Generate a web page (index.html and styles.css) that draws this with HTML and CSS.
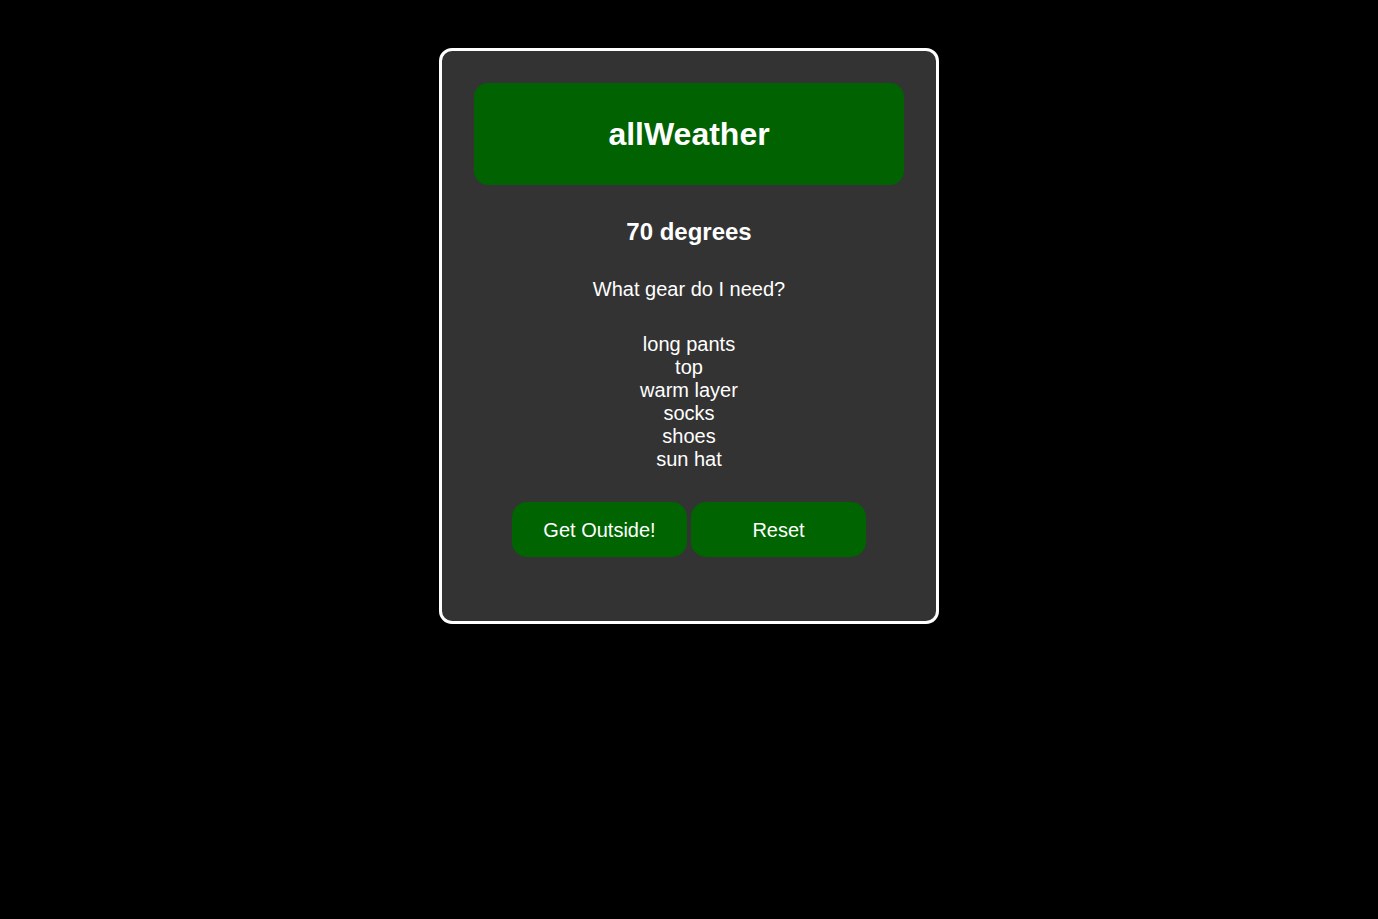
FILE: index.html
```html
<!DOCTYPE html>
<html>
<head>
<meta charset="utf-8">
<link rel="stylesheet" href="styles.css">
</head>
<body>
<main class="card">
  <header class="banner"><h1 class="title">allWeather</h1></header>
  <h2 class="temp">70 degrees</h2>
  <p class="question">What gear do I need?</p>
  <ul class="gear">
    <li>long pants</li>
    <li>top</li>
    <li>warm layer</li>
    <li>socks</li>
    <li>shoes</li>
    <li>sun hat</li>
  </ul>
  <div class="actions">
    <button class="btn">Get Outside!</button>
    <button class="btn">Reset</button>
  </div>
</main>
</body>
</html>
```
FILE: styles.css
```css
html, body {
  margin: 0;
  padding: 0;
  background: #000;
}
body {
  font-family: "Liberation Sans", Arial, sans-serif;
  color: #fff;
  display: flex;
  justify-content: center;
  padding-top: 48px;
}
.card {
  box-sizing: border-box;
  width: 500px;
  height: 576px;
  background: #333333;
  border: 3px solid #fff;
  border-radius: 13px;
  padding: 32px 32px 0;
  display: flex;
  flex-direction: column;
  align-items: center;
  text-align: center;
}
.banner {
  width: 100%;
  height: 102px;
  background: #006200;
  border-radius: 14px;
  display: flex;
  align-items: center;
  justify-content: center;
}
.title {
  margin: 1px 0 0;
  font-size: 32px;
  line-height: 37px;
  font-weight: bold;
}
.temp {
  margin: 33px 0 0;
  font-size: 24px;
  line-height: 28px;
  font-weight: bold;
}
.question {
  margin: 32px 0 0;
  font-size: 20px;
  line-height: 23px;
}
.gear {
  list-style: none;
  margin: 32px 0 0;
  padding: 0;
  font-size: 20px;
  line-height: 23px;
}
.actions {
  margin-top: 31px;
  display: flex;
  gap: 4px;
}
.btn {
  width: 175px;
  height: 55px;
  border: none;
  border-radius: 15px;
  background: #006400;
  color: #fff;
  font-family: "Liberation Sans", Arial, sans-serif;
  font-size: 20px;
  padding: 2px 0 0;
}
```
